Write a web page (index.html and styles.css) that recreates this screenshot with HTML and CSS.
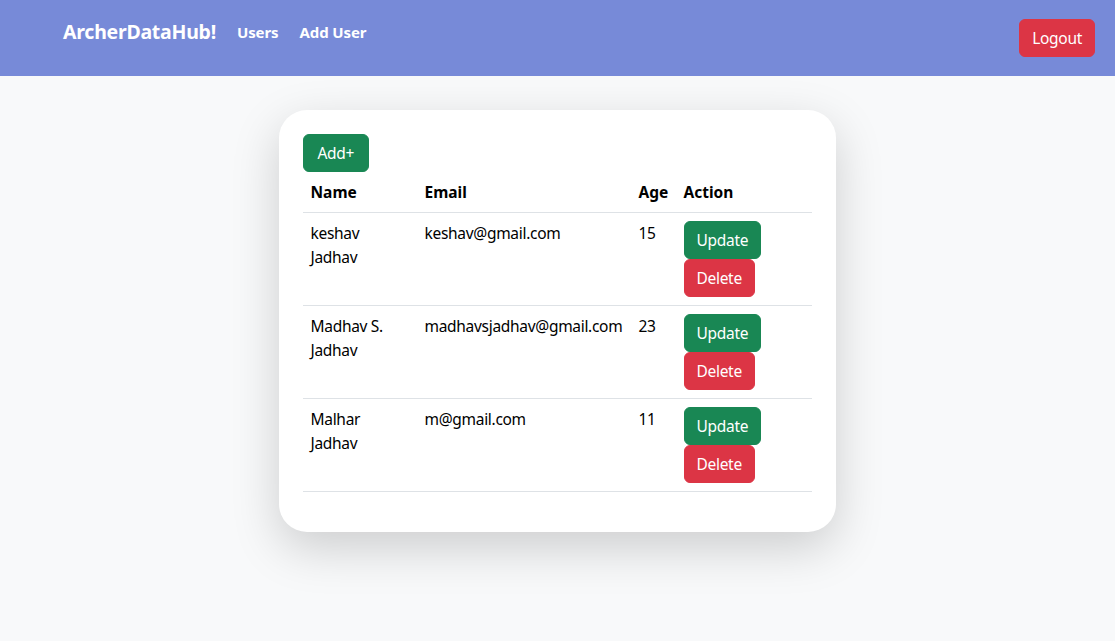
FILE: index.html
```html
<!DOCTYPE html>
<html lang="en">
<head>
<meta charset="utf-8">
<title>ArcherDataHub</title>
<link rel="stylesheet" href="styles.css">
</head>
<body>
<nav class="navbar">
  <div class="nav-left">
    <a class="brand" href="#">ArcherDataHub!</a>
    <a class="nav-link" href="#">Users</a>
    <a class="nav-link" href="#">Add User</a>
  </div>
  <button class="btn btn-danger logout">Logout</button>
</nav>
<main class="page">
  <section class="card">
    <button class="btn btn-success btn-add">Add+</button>
    <table class="table">
      <colgroup>
        <col class="c-name"><col class="c-email"><col class="c-age"><col class="c-action">
      </colgroup>
      <thead>
        <tr><th>Name</th><th>Email</th><th>Age</th><th>Action</th></tr>
      </thead>
      <tbody>
        <tr>
          <td>keshav Jadhav</td><td>keshav@gmail.com</td><td>15</td>
          <td><button class="btn btn-success">Update</button><br><button class="btn btn-danger">Delete</button></td>
        </tr>
        <tr>
          <td>Madhav S. Jadhav</td><td>madhavsjadhav@gmail.com</td><td>23</td>
          <td><button class="btn btn-success">Update</button><br><button class="btn btn-danger">Delete</button></td>
        </tr>
        <tr>
          <td>Malhar Jadhav</td><td>m@gmail.com</td><td>11</td>
          <td><button class="btn btn-success">Update</button><br><button class="btn btn-danger">Delete</button></td>
        </tr>
      </tbody>
    </table>
  </section>
</main>
</body>
</html>
```
FILE: styles.css
```css
* { box-sizing: border-box; }
html, body { margin: 0; padding: 0; }
body {
  font-family: "Noto Sans", "Open Sans", sans-serif;
  font-size: 15.5px;
  letter-spacing: -0.3px;
  line-height: 24px;
  color: #212529;
  background: #f8f9fa;
  min-height: 641px;
}
.navbar {
  height: 76px;
  background: #778ad8;
  display: flex;
  justify-content: space-between;
  align-items: flex-start;
  padding: 0 20px 0 63px;
}
.nav-left {
  display: flex;
  align-items: flex-start;
  gap: 21px;
}
.brand {
  color: #fff;
  font-weight: 700;
  font-size: 19.5px;
  line-height: 30px;
  margin-top: 17px;
  text-decoration: none;
  letter-spacing: -0.25px;
}
.nav-link {
  color: #fff;
  font-weight: 700;
  font-size: 15px;
  letter-spacing: -0.1px;
  line-height: 24px;
  margin-top: 20px;
  text-decoration: none;
}
.logout { margin-top: 19px; }
.btn {
  font-family: inherit;
  font-size: 15.5px;
  letter-spacing: -0.3px;
  line-height: 24px;
  padding: 6px 12px;
  border: 1px solid transparent;
  border-radius: 6px;
  color: #fff;
  cursor: pointer;
  display: inline-block;
}
.btn-add { padding: 6px 14px; }
.btn-success { background: #198754; border-color: #198754; }
.btn-danger { background: #dc3545; border-color: #dc3545; }
.page {
  display: flex;
  justify-content: center;
  padding-top: 34px;
}
.card {
  width: 557px;
  margin-left: -1px;
  background: #fff;
  border-radius: 28px;
  padding: 24px 24px 24px;
  box-shadow: 0 16px 48px rgba(0, 0, 0, 0.175);
}
.table {
  width: 509px;
  border-collapse: collapse;
  table-layout: fixed;
  margin-bottom: 16px;
  color: #000;
}
.c-name { width: 114px; }
.c-email { width: 214px; }
.c-age { width: 45px; }
.c-action { width: 136px; }
.table th, .table td {
  padding: 8px;
  text-align: left;
  vertical-align: top;
  border-bottom: 1px solid #dee2e6;
}
.table th { font-weight: 700; letter-spacing: 0; }
.table td:nth-child(2) { white-space: nowrap; }
```
